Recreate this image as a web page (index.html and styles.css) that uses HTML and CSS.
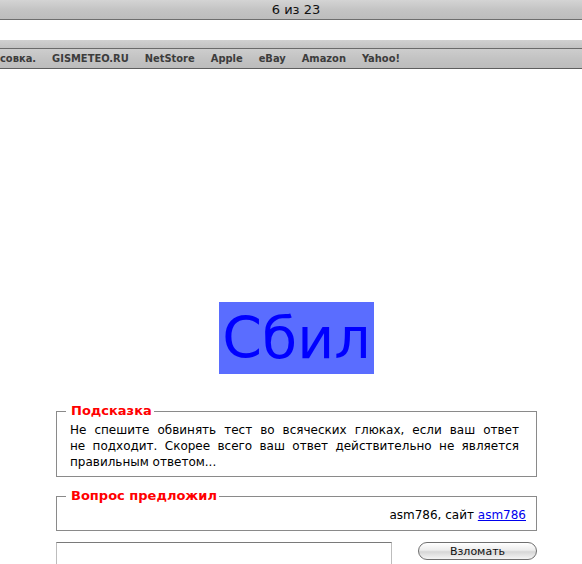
FILE: index.html
```html
<!DOCTYPE html>
<html lang="ru">
<head>
    <meta charset="UTF-8">
    <title>6 из 23</title>
    <link rel="stylesheet" href="styles.css">
</head>
<body>
    <div class="titlebar">6 из 23</div>
    <div class="addressgap"></div>
    <div class="toolbar"></div>
    <div class="bookmarks">
        <span>совка.</span>
        <span>GISMETEO.RU</span>
        <span>NetStore</span>
        <span>Apple</span>
        <span>eBay</span>
        <span>Amazon</span>
        <span>Yahoo!</span>
    </div>

    <div class="page">
        <div class="answer-wrap">
            <span class="answer">Сбил</span>
        </div>

        <fieldset class="hint">
            <legend>Подсказка</legend>
            <div class="hint-text">
                <span class="line">Не спешите обвинять тест во всяческих глюках, если ваш ответ</span>
                <span class="line">не подходит. Скорее всего ваш ответ действительно не является</span>
                <span>правильным ответом...</span>
            </div>
        </fieldset>

        <fieldset class="author">
            <legend>Вопрос предложил</legend>
            <div class="author-text">asm786, сайт <a href="#">asm786</a></div>
        </fieldset>

        <form class="crack">
            <input type="text" class="crack-input">
            <button type="button" class="crack-btn">Взломать</button>
        </form>
        <div class="note">Ч</div>
    </div>
</body>
</html>
```

FILE: styles.css
```css
body {
    margin: 0;
    font-family: "DejaVu Sans", Verdana, sans-serif;
    background: #fff;
    overflow: hidden;
}
.titlebar {
    height: 19px;
    line-height: 19px;
    padding-left: 10px;
    text-align: center;
    font-size: 13px;
    color: #111;
    background: linear-gradient(#d4d4d4, #c4c4c4 50%, #bdbdbd);
    border-bottom: 1px solid #6e6e6e;
}
.addressgap {
    height: 20px;
}
.toolbar {
    height: 8px;
    background: linear-gradient(#d0d0d0, #c2c2c2);
    border-bottom: 1px solid #6a6a6a;
}
.bookmarks {
    height: 19px;
    display: flex;
    align-items: center;
    gap: 16px;
    font-family: "DejaVu Sans Condensed", "DejaVu Sans", sans-serif;
    font-size: 11px;
    font-weight: bold;
    color: #3c3c3c;
    background: linear-gradient(#cdcdcd, #c3c3c3 50%, #bcbcbc);
    border-bottom: 1px solid #5e5e5e;
}
.page {
    margin-left: 56px;
    width: 481px;
    padding-top: 233px;
}
.answer-wrap {
    text-align: center;
    height: 72px;
}
.answer {
    display: inline-block;
    height: 72px;
    line-height: 72px;
    padding: 0 3px;
    font-size: 57px;
    color: #0000ff;
    background: #5a6dff;
}
fieldset {
    margin: 0;
    border: 1px solid #8a8a8a;
    font-size: 12px;
    line-height: 16px;
}
legend {
    margin-left: -4px;
    padding: 0 2px 0 5px;
    font-size: 13px;
    font-weight: bold;
    color: #ff0000;
}
.hint {
    margin-top: 29px;
    padding: 3px 17px 6px 13px;
}
.hint-text .line {
    display: block;
    text-align: justify;
    text-align-last: justify;
}
.author {
    margin-top: 11px;
    padding: 3px 10px 7px 13px;
}
.author-text {
    text-align: right;
}
.author-text a {
    color: #0000ee;
}
.crack {
    margin-top: 11px;
    display: flex;
    align-items: flex-start;
    justify-content: space-between;
}
.crack-input {
    width: 336px;
    height: 24px;
    margin: 0;
    padding: 0;
    box-sizing: border-box;
    border: 1px solid #bdbdbd;
    border-top-color: #7a7a7a;
}
.crack-btn {
    width: 119px;
    height: 18px;
    padding: 0;
    font-family: "DejaVu Sans", sans-serif;
    font-size: 11px;
    color: #111;
    border: 1px solid #6f6f6f;
    border-radius: 9px;
    background: linear-gradient(#ffffff, #ececec 45%, #d6d6d6 55%, #f4f4f4);
}
.note {
    text-align: right;
    padding-right: 28px;
    font-size: 13px;
    font-weight: bold;
    color: #ff0000;
}
```
